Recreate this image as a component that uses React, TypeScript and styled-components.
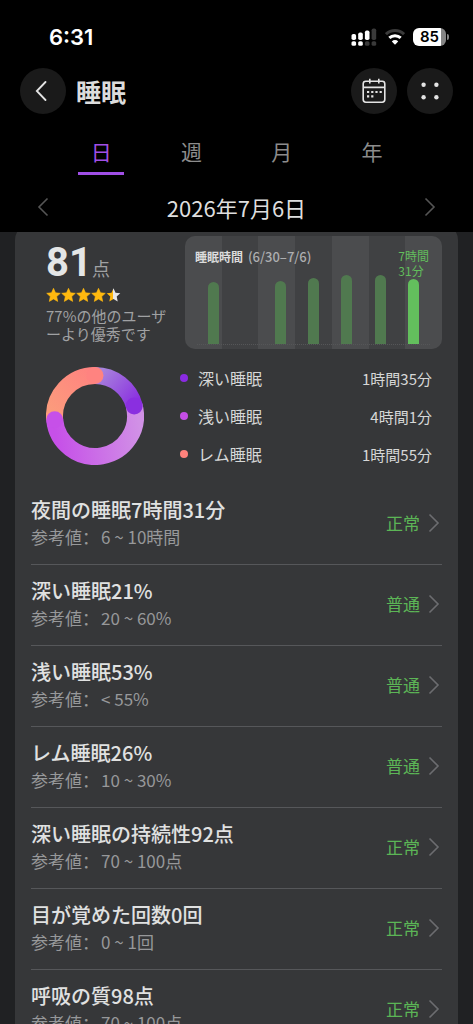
import React from "react";
import styled, { createGlobalStyle } from "styled-components";

const GlobalStyle = createGlobalStyle`
  * { box-sizing: border-box; }
  body {
    margin: 0;
    background: #202123;
    color: #e6e6e6;
    font-family: "Noto Sans CJK JP", sans-serif;
  }
  button {
    font: inherit;
    color: inherit;
    background: none;
    border: 0;
    padding: 0;
    cursor: pointer;
  }
`;

const Screen = styled.div`
  height: 100vh;
  display: flex;
  flex-direction: column;
  overflow: hidden;
`;

const TopArea = styled.header`
  flex: none;
  background: #000;
`;

const StatusBar = styled.div`
  height: 68px;
  padding: 6px 24px 0 49px;
  display: flex;
  align-items: center;
  justify-content: space-between;
`;

const Clock = styled.time`
  font: 600 22px/24px Inter, sans-serif;
  color: #fff;
`;

const StatusIcons = styled.div`
  display: flex;
  align-items: center;
  gap: 8px;
`;

const Battery = styled.div`
  display: flex;
  align-items: center;
  gap: 1px;
`;

const BatteryLevel = styled.span`
  width: 33px;
  height: 18px;
  border-radius: 6px;
  background: linear-gradient(90deg, #fff 85%, #858585 85%);
  color: #000;
  font: 600 15px/18px Inter, sans-serif;
  text-align: center;
`;

const BatteryTip = styled.span`
  width: 2px;
  height: 6px;
  border-radius: 0 2px 2px 0;
  background: #858585;
`;

const NavBar = styled.div`
  height: 46px;
  padding: 0 20px;
  display: flex;
  align-items: center;
  gap: 10px;
`;

const PageTitle = styled.h1`
  flex: 1;
  margin: 0;
  font-size: 25px;
  line-height: 36px;
  font-weight: 700;
  color: #dcdcdc;
`;

const RoundButton = styled.button`
  width: 46px;
  height: 46px;
  border-radius: 50%;
  background: #1a1a1a;
  display: grid;
  place-items: center;
`;

const Tabs = styled.nav`
  display: grid;
  grid-template-columns: repeat(4, 1fr);
  justify-items: center;
  padding: 0 56px;
  margin-top: 17px;
`;

const Tab = styled.button<{ $active: boolean }>`
  width: 46px;
  height: 44px;
  padding-bottom: 1px;
  font-size: 21px;
  line-height: 40px;
  border-bottom: 3px solid ${(p) => (p.$active ? "#a04fe6" : "transparent")};
  color: ${(p) => (p.$active ? "#a04fe6" : "#8c8c8c")};
`;

const DateBar = styled.div`
  height: 57px;
  padding: 7px 37px 0;
  display: flex;
  align-items: center;
  justify-content: space-between;
`;

const DateText = styled.span`
  font-size: 22px;
  line-height: 28px;
  color: #dedede;
`;

const IconButton = styled.button`
  display: flex;
  color: #555;
`;

const Content = styled.main`
  flex: 1;
  min-height: 0;
  overflow: hidden;
`;

const Card = styled.section`
  margin: -8px 15px 0;
  padding: 12px 16px 0;
  border-radius: 16px;
  background: #363739;
`;

const Summary = styled.div`
  display: flex;
  justify-content: space-between;
`;

const ScoreBlock = styled.div`
  padding: 7px 0 0 15px;
`;

const Score = styled.div`
  display: flex;
  align-items: baseline;
  height: 40px;
  font-size: 18px;
  line-height: 40px;
  color: #a0a1a3;
`;

const ScoreNumber = styled.strong`
  font: 700 40px/40px Roboto, sans-serif;
  color: #e4e6e6;
`;

const Stars = styled.div`
  display: flex;
  margin: 4px 0;
  height: 16px;
`;

const ScoreNote = styled.p`
  margin: 0;
  width: 126px;
  font-size: 15px;
  line-height: 18px;
  color: #a0a1a3;
  line-break: anywhere;
`;

const Chart = styled.div`
  flex: 0 1 257px;
  height: 113px;
  display: grid;
  border-radius: 10px;
  background: repeating-linear-gradient(
    90deg,
    #4b4c4e 0 calc(100% / 7),
    #404143 calc(100% / 7) calc(200% / 7)
  );
`;

const ChartHeader = styled.div`
  grid-area: 1 / 1;
  display: flex;
  align-items: flex-start;
  justify-content: space-between;
  padding: 12px 13px 0 10px;
  font-size: 12px;
  line-height: 15px;
`;

const ChartTitle = styled.div`
  font-size: 13px;
  line-height: 18px;
  font-weight: 500;
  color: #adaeb0;
`;

const ChartName = styled.strong`
  font-size: 12px;
  font-weight: 700;
  color: #dcdcdc;
  margin-right: 2px;
`;

const ChartValue = styled.div`
  color: #62bd5c;
`;

const Bars = styled.div`
  grid-area: 1 / 1;
  align-self: end;
  display: grid;
  grid-template-columns: repeat(7, 1fr);
  justify-items: center;
  align-items: end;
  margin: 0 12px 4px;
  border-bottom: 1px dotted #555658;
`;

const Bar = styled.div<{ $height: number; $current: boolean }>`
  width: 11px;
  height: ${(p) => p.$height}px;
  border-radius: 6px 6px 0 0;
  background: ${(p) => (p.$current ? "#63bf5d" : "#50794f")};
`;

const Stages = styled.div`
  display: flex;
  align-items: center;
  gap: 36px;
  padding: 10px 10px 11px 15px;
`;

const StageList = styled.ul`
  flex: 1;
  margin: 0;
  padding: 0;
  list-style: none;
`;

const Stage = styled.li`
  display: flex;
  align-items: center;
  height: 38px;
  font-size: 16px;
  color: #d6d7d7;
`;

const Dot = styled.span<{ $color: string }>`
  width: 8px;
  height: 8px;
  margin-right: 10px;
  border-radius: 50%;
  background: ${(p) => p.$color};
`;

const StageValue = styled.span`
  margin-left: auto;
  font-size: 15px;
`;

const MetricList = styled.ul`
  margin: 0;
  padding: 0;
  list-style: none;
`;

const MetricItem = styled.li`
  border-bottom: 1px solid #56575a;
`;

const MetricButton = styled.button`
  width: 100%;
  padding: 12px 2px 14px 0;
  display: flex;
  align-items: center;
  justify-content: space-between;
  text-align: left;
`;

const MetricName = styled.span`
  display: block;
  font-size: 20px;
  line-height: 28px;
  font-weight: 500;
  color: #e0e1e1;
`;

const MetricReference = styled.span`
  display: flex;
  font-size: 17px;
  line-height: 26px;
  color: #97989a;
`;

const Colon = styled.span`
  width: 19px;
  font-family: "Noto Sans CJK SC", sans-serif;
`;

const MetricState = styled.span`
  display: flex;
  align-items: center;
  gap: 8px;
  font-size: 17px;
  line-height: 26px;
  color: #5cb556;
`;

const weekBars = [62, 0, 63, 66, 69, 69, 65];

const stages = [
  { name: "深い睡眠", value: "1時間35分", color: "#8a2be2" },
  { name: "浅い睡眠", value: "4時間1分", color: "#c44ee6" },
  { name: "レム睡眠", value: "1時間55分", color: "#ff827c" },
];

const metrics = [
  { name: "夜間の睡眠7時間31分", reference: "6 ~ 10時間", state: "正常" },
  { name: "深い睡眠21%", reference: "20 ~ 60%", state: "普通" },
  { name: "浅い睡眠53%", reference: "< 55%", state: "普通" },
  { name: "レム睡眠26%", reference: "10 ~ 30%", state: "普通" },
  { name: "深い睡眠の持続性92点", reference: "70 ~ 100点", state: "正常" },
  { name: "目が覚めた回数0回", reference: "0 ~ 1回", state: "正常" },
  { name: "呼吸の質98点", reference: "70 ~ 100点", state: "正常" },
];

function Chevron({ direction, color }: { direction: "left" | "right"; color: string }) {
  return (
    <svg width="12" height="20" viewBox="0 0 12 20" fill="none" stroke={color} strokeWidth="1.6">
      <path d={direction === "left" ? "M10.5 1.5 2 10l8.5 8.5" : "M1.5 1.5 10 10l-8.5 8.5"} />
    </svg>
  );
}

const STAR = "M7.5 .8 9.5 5.3 14.3 5.8 10.7 9.1 11.7 13.9 7.5 11.5 3.3 13.9 4.3 9.1 .7 5.8 5.5 5.3Z";

function Star({ half }: { half: boolean }) {
  return (
    <svg width="15" height="16" viewBox="0 0 15 15">
      <defs>
        <linearGradient id="half-star">
          <stop offset="50%" stopColor="#ffb90f" />
          <stop offset="50%" stopColor="#e8e8e8" />
        </linearGradient>
      </defs>
      <path
        d={STAR}
        fill={half ? "url(#half-star)" : "#ffb90f"}
        stroke={half ? "none" : "#ffb90f"}
        strokeWidth="0.6"
        strokeLinejoin="round"
      />
    </svg>
  );
}

const RADIUS = 40.5;
const CENTER = 49;

function pointAt(share: number) {
  const angle = share * 2 * Math.PI;
  return [CENTER + RADIUS * Math.sin(angle), CENTER - RADIUS * Math.cos(angle)];
}

function arc(from: number, to: number) {
  const [x1, y1] = pointAt(from);
  const [x2, y2] = pointAt(to);
  return `M${x1} ${y1}A${RADIUS} ${RADIUS} 0 ${to - from > 0.5 ? 1 : 0} 1 ${x2} ${y2}`;
}

function StageRing() {
  const ends = [
    { share: 0.21, color: "#8a2fe0" },
    { share: 0.735, color: "#c650e8" },
    { share: 1, color: "#ff8380" },
  ];
  return (
    <svg width="98" height="98" viewBox="0 0 98 98" fill="none">
      <defs>
        <linearGradient id="deep" gradientUnits="userSpaceOnUse" x1="52" y1="8" x2="89" y2="38">
          <stop stopColor="#a884dc" />
          <stop offset="1" stopColor="#8a2fe0" />
        </linearGradient>
        <linearGradient id="light" gradientUnits="userSpaceOnUse" x1="92" y1="45" x2="8" y2="56">
          <stop stopColor="#d191e6" />
          <stop offset="1" stopColor="#c650e8" />
        </linearGradient>
        <linearGradient id="rem" gradientUnits="userSpaceOnUse" x1="8" y1="50" x2="49" y2="8">
          <stop stopColor="#fb9c7c" />
          <stop offset="1" stopColor="#ff8380" />
        </linearGradient>
      </defs>
      <g strokeWidth="17">
        <path d={arc(0, 0.21)} stroke="url(#deep)" />
        <path d={arc(0.21, 0.735)} stroke="url(#light)" />
        <path d={arc(0.735, 1)} stroke="url(#rem)" />
      </g>
      {ends.map(({ share, color }) => {
        const [cx, cy] = pointAt(share);
        return <circle key={share} cx={cx} cy={cy} r="8.5" fill={color} />;
      })}
    </svg>
  );
}

function SignalIcon() {
  return (
    <svg width="26" height="18" viewBox="0 0 26 18" fill="#fff">
      <rect x="0.5" y="6" width="4.6" height="6" rx="1.8" />
      <rect x="7.2" y="4.5" width="4.6" height="7.5" rx="1.8" />
      <rect x="13.9" y="2.5" width="4.6" height="9.5" rx="1.8" />
      <rect x="20.6" y="0.5" width="4.6" height="11.5" rx="1.8" fill="#3a3a3a" />
      <rect x="0.5" y="13.2" width="4.6" height="4.6" rx="1.6" />
      <rect x="7.2" y="13.2" width="4.6" height="4.6" rx="1.6" />
      <rect x="13.9" y="13.2" width="4.6" height="4.6" rx="1.6" fill="#3a3a3a" />
      <rect x="20.6" y="13.2" width="4.6" height="4.6" rx="1.6" fill="#3a3a3a" />
    </svg>
  );
}

function WifiIcon() {
  return (
    <svg width="20" height="18" viewBox="0 0 20 18" fill="none" strokeWidth="3">
      <path d="M1 6.2a13 13 0 0 1 18 0" stroke="#3a3a3a" />
      <path d="M4.3 9.9a8.4 8.4 0 0 1 11.4 0" stroke="#fff" />
      <path d="M10 16.8 6.8 13.4a4.6 4.6 0 0 1 6.4 0Z" fill="#fff" />
    </svg>
  );
}

function CalendarIcon() {
  return (
    <svg width="24" height="26" viewBox="0 0 24 26" fill="none" stroke="#e4e4e4" strokeWidth="1.6">
      <rect x="1.2" y="3.2" width="21.6" height="21" rx="2.6" />
      <path d="M1.2 9.4h21.6M7.8 .8v4.6M16.8 .8v4.6" />
      <path
        d="M5 14h2.2M9.2 14h2.2M13.4 14h2.2M17.6 14h2.2M5 18.4h2.2M9.2 18.4h2.2"
        strokeWidth="2.2"
      />
    </svg>
  );
}

function MoreIcon() {
  return (
    <svg width="18" height="18" viewBox="0 0 18 18" fill="#e4e4e4">
      <circle cx="2.6" cy="2.8" r="2.2" />
      <circle cx="15.4" cy="2.8" r="2.2" />
      <circle cx="2.6" cy="15.2" r="2.2" />
      <circle cx="15.4" cy="15.2" r="2.2" />
    </svg>
  );
}

export default function App() {
  return (
    <Screen>
      <GlobalStyle />
      <TopArea>
        <StatusBar>
          <Clock>6:31</Clock>
          <StatusIcons>
            <SignalIcon />
            <WifiIcon />
            <Battery>
              <BatteryLevel>85</BatteryLevel>
              <BatteryTip />
            </Battery>
          </StatusIcons>
        </StatusBar>
        <NavBar>
          <RoundButton aria-label="戻る">
            <svg width="16" height="20" viewBox="0 0 16 20" fill="none" stroke="#e4e4e4" strokeWidth="1.8">
              <path d="M10.5 1 1.8 10l8.7 9" strokeLinecap="round" />
            </svg>
          </RoundButton>
          <PageTitle>睡眠</PageTitle>
          <RoundButton aria-label="カレンダー">
            <CalendarIcon />
          </RoundButton>
          <RoundButton aria-label="メニュー">
            <MoreIcon />
          </RoundButton>
        </NavBar>
        <Tabs>
          {["日", "週", "月", "年"].map((label, index) => (
            <Tab key={label} $active={index === 0}>
              {label}
            </Tab>
          ))}
        </Tabs>
        <DateBar>
          <IconButton aria-label="前の日">
            <Chevron direction="left" color="#555" />
          </IconButton>
          <DateText>2026年7月6日</DateText>
          <IconButton aria-label="次の日">
            <Chevron direction="right" color="#555" />
          </IconButton>
        </DateBar>
      </TopArea>
      <Content>
        <Card>
          <Summary>
            <ScoreBlock>
              <Score>
                <ScoreNumber>81</ScoreNumber>点
              </Score>
              <Stars>
                {[0, 1, 2, 3, 4].map((n) => (
                  <Star key={n} half={n === 4} />
                ))}
              </Stars>
              <ScoreNote>77%の他のユーザーより優秀です</ScoreNote>
            </ScoreBlock>
            <Chart>
              <ChartHeader>
                <ChartTitle>
                  <ChartName>睡眠時間</ChartName> (6/30–7/6)
                </ChartTitle>
                <ChartValue>
                  7時間
                  <br />
                  31分
                </ChartValue>
              </ChartHeader>
              <Bars>
                {weekBars.map((height, index) => (
                  <Bar key={index} $height={height} $current={index === 6} />
                ))}
              </Bars>
            </Chart>
          </Summary>
          <Stages>
            <StageRing />
            <StageList>
              {stages.map((stage) => (
                <Stage key={stage.name}>
                  <Dot $color={stage.color} />
                  {stage.name}
                  <StageValue>{stage.value}</StageValue>
                </Stage>
              ))}
            </StageList>
          </Stages>
          <MetricList>
            {metrics.map((metric) => (
              <MetricItem key={metric.name}>
                <MetricButton>
                  <span>
                    <MetricName>{metric.name}</MetricName>
                    <MetricReference>
                      参考値<Colon lang="zh-CN">{"\uFF1A"}</Colon>
                      {metric.reference}
                    </MetricReference>
                  </span>
                  <MetricState>
                    {metric.state}
                    <Chevron direction="right" color="#6c6d70" />
                  </MetricState>
                </MetricButton>
              </MetricItem>
            ))}
          </MetricList>
        </Card>
      </Content>
    </Screen>
  );
}
